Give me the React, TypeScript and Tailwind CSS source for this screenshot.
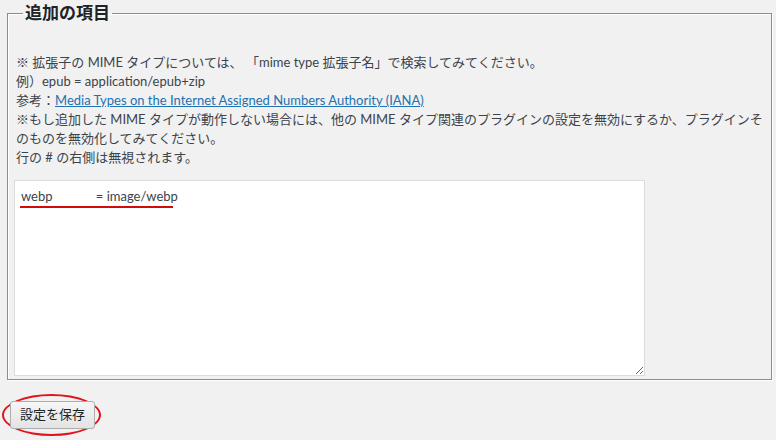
import React from 'react';

const FONT = "font-['Lato','Noto_Sans_CJK_JP',sans-serif]";

const App: React.FC = () => {
  return (
    <div className={`w-[776px] h-[440px] bg-[#f1f1f1] text-[#3c434a] ${FONT} overflow-hidden`}>
      <fieldset className="mx-[7px] mt-[1px] w-[759px] border border-[#8c8c8c] shadow-[inset_1px_1px_0_#fff,1px_1px_0_#fff] pl-[8px] pr-[8px] pt-[28px] pb-[3px]">
        <legend className="ml-[7px] px-[2px] text-[17px] font-bold leading-[24px] text-[#1d2327]">追加の項目</legend>

        <div className="text-[13px] leading-[19px]">
          <p className="whitespace-nowrap">※ 拡張子の MIME タイプについては、 「mime type 拡張子名」で検索してみてください。</p>
          <p className="whitespace-nowrap">例）epub = application/epub+zip</p>
          <p className="whitespace-nowrap">
            参考：<a href="#" className="text-[#2271b1] underline">Media Types on the Internet Assigned Numbers Authority (IANA)</a>
          </p>
          <p className="whitespace-nowrap">※もし追加した MIME タイプが動作しない場合には、他の MIME タイプ関連のプラグインの設定を無効にするか、プラグインそ</p>
          <p className="whitespace-nowrap">のものを無効化してみてください。</p>
          <p className="whitespace-nowrap">行の # の右側は無視されます。</p>
        </div>

        <div className="relative mt-[13px] -ml-[2px] w-[631px]">
          <textarea
            className={`block w-[631px] h-[196px] bg-white border border-[#dcdcde] px-[6px] py-[5px] text-[13px] leading-[20px] text-[#3c434a] ${FONT} resize-y outline-none`}
            defaultValue={'webp             = image/webp'}
          />
          <div className="absolute left-[6px] top-[26px] w-[153px] h-[2px] bg-[#d10a0a]" />
        </div>
      </fieldset>

      <div className="mt-[14px] ml-[2px] relative w-[99px] h-[42px]">
        <div className="absolute inset-0 rounded-[50%] border-2 border-[#e0151b]" />
        <button className="absolute left-[8px] top-[7px] w-[85px] h-[28px] rounded-[3px] border border-[#adadad] bg-gradient-to-b from-[#f6f6f6] to-[#e3e3e3] text-[13px] text-[#1d2327]">
          設定を保存
        </button>
      </div>
    </div>
  );
};

export default App;
